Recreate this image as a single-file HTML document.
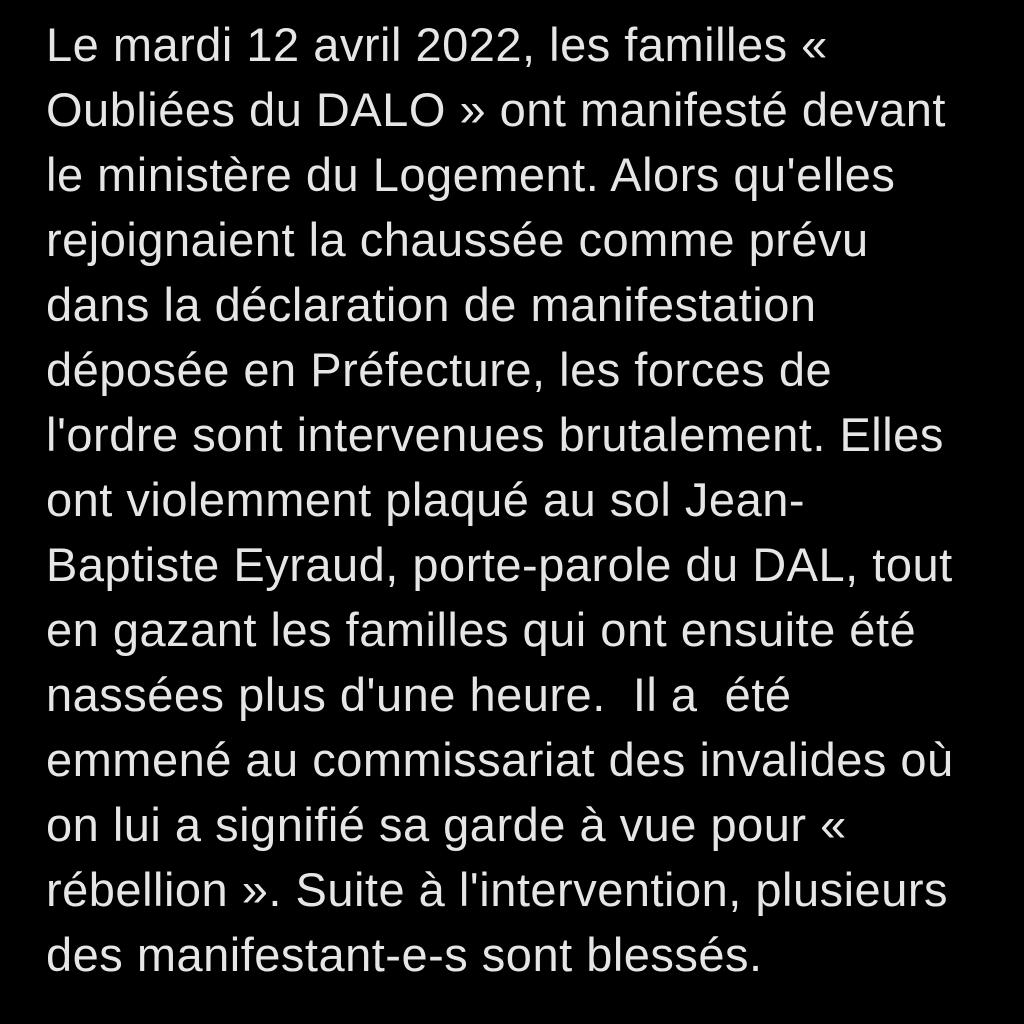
<!DOCTYPE html>
<html><head><meta charset="utf-8"><style>
html,body{margin:0;padding:0;background:#000;width:1024px;height:1024px;overflow:hidden}
.t{position:absolute;left:46px;top:12px;font-family:"Liberation Sans",sans-serif;font-size:47px;letter-spacing:0.5px;line-height:65px;color:#e6e6e6;white-space:pre}
</style></head><body><div class="t">Le mardi 12 avril 2022, les familles «
Oubliées du DALO » ont manifesté devant
le ministère du Logement. Alors qu'elles
rejoignaient la chaussée comme prévu
dans la déclaration de manifestation
déposée en Préfecture, les forces de
l'ordre sont intervenues brutalement. Elles
ont violemment plaqué au sol Jean-
Baptiste Eyraud, porte-parole du DAL, tout
en gazant les familles qui ont ensuite été
nassées plus d'une heure.  Il a  été
emmené au commissariat des invalides où
on lui a signifié sa garde à vue pour «
rébellion ». Suite à l'intervention, plusieurs
des manifestant-e-s sont blessés.</div></body></html>
